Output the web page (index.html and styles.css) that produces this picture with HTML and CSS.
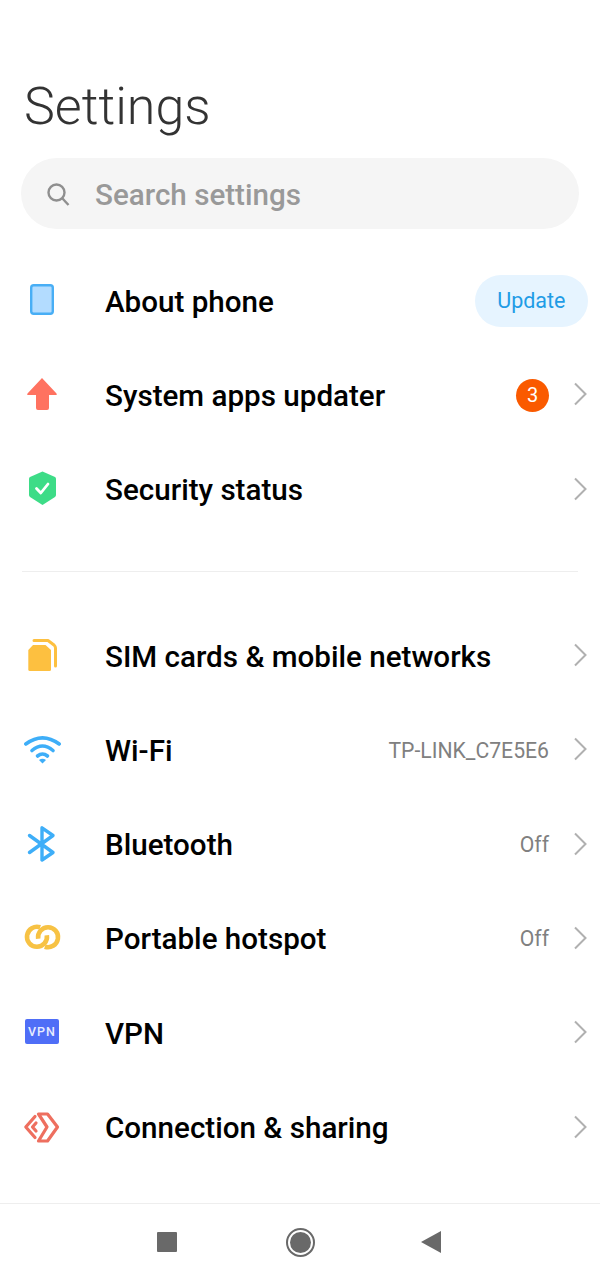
FILE: index.html
```html
<!DOCTYPE html>
<html lang="en">

<head>
  <meta charset="UTF-8">
  <meta name="viewport" content="width=device-width, initial-scale=1.0">
  <title>Settings</title>

  <link rel="stylesheet" href="styles.css">
</head>

<body>
  <main id="screen">
    <h1 class="title">Settings</h1>

    <div class="search">
      <svg class="search-icon" width="26" height="26" viewBox="0 0 26 26">
        <circle cx="11.5" cy="11.5" r="8" fill="none" stroke="#8f8f8f" stroke-width="2.4" />
        <path d="M17.5 17.5 L23.5 24" fill="none" stroke="#8f8f8f" stroke-width="2.4" />
      </svg>
      <span class="search-text">Search settings</span>
    </div>

    <div class="group group-top">
      <div class="row">
        <div class="row-icon">
          <svg width="40" height="40" viewBox="0 0 40 40">
            <rect x="9.200" y="4.200" width="21.600" height="28.600" rx="2.500" fill="#b3dcff" stroke="#48aef5" stroke-width="2.400" />
          </svg>
        </div>
        <span class="label">About phone</span>
        <span class="update">Update</span>
      </div>

      <div class="row">
        <div class="row-icon">
          <svg width="40" height="40" viewBox="0 0 40 40">
            <path d="M20 3 L34.500 18.500 Q35.500 20 34 20 L27 20 L27 33 Q27 35 25 35 L16 35 Q14 35 14 33 L14 20 L6.500 20 Q4.500 20 5.500 18.500 Z" fill="#ff7260" />
          </svg>
        </div>
        <span class="label">System apps updater</span>
        <span class="badge">3</span>
        <svg class="chevron" width="14" height="24" viewBox="0 0 14 24"><path d="M2 1.500 L12.500 12 L2 22.500" /></svg>
      </div>

      <div class="row">
        <div class="row-icon">
          <svg width="40" height="40" viewBox="0 0 40 40">
            <path d="M20.500 1.500 L33 7 Q34 7.500 34 9 L34 25 Q34 26 33 27 L20.500 35 L8 27 Q7 26 7 25 L7 9 Q7 7.500 8 7 Z" fill="#3ddc87" />
            <path d="M14.500 18.500 L18.800 23 L26 14" fill="none" stroke="#fff" stroke-width="2.800" stroke-linecap="round" stroke-linejoin="round" />
          </svg>
        </div>
        <span class="label">Security status</span>
        <svg class="chevron" width="14" height="24" viewBox="0 0 14 24"><path d="M2 1.500 L12.500 12 L2 22.500" /></svg>
      </div>
    </div>

    <div class="divider"></div>

    <div class="group">
      <div class="row">
        <div class="row-icon">
          <svg width="40" height="40" viewBox="0 0 40 40">
            <path d="M12 4.500 L26 4.500 L32 9 Q33.500 10.500 33.500 12 L33.500 30" fill="none" stroke="#fdc040" stroke-width="3" stroke-linecap="round" stroke-linejoin="round" />
            <path d="M11 9 L23.500 9 L29 14 L29 33.500 Q29 35 27.500 35 L7.800 35 Q6.300 35 6.300 33.500 L6.300 14 Z" fill="#fdc040" />
          </svg>
        </div>
        <span class="label">SIM cards &amp; mobile networks</span>
        <svg class="chevron" width="14" height="24" viewBox="0 0 14 24"><path d="M2 1.500 L12.500 12 L2 22.500" /></svg>
      </div>

      <div class="row">
        <div class="row-icon">
          <svg width="40" height="40" viewBox="0 0 40 40">
            <g fill="none" stroke="#3eaef8" stroke-width="3.600" stroke-linecap="round">
              <path d="M3.800 14 Q20.500 1.600 37.200 14" />
              <path d="M10 20.500 Q20.500 11.500 31 20.500" />
              <path d="M15.500 26 Q20.500 22 25.500 26" />
            </g>
            <path d="M20.500 33.500 L17 30 Q20.500 27.500 24 30 Z" fill="#3eaef8" />
          </svg>
        </div>
        <span class="label">Wi-Fi</span>
        <span class="value">TP-LINK_C7E5E6</span>
        <svg class="chevron" width="14" height="24" viewBox="0 0 14 24"><path d="M2 1.500 L12.500 12 L2 22.500" /></svg>
      </div>

      <div class="row">
        <div class="row-icon">
          <svg width="40" height="40" viewBox="0 0 40 40">
            <path d="M7.500 10.500 L31 27.500 L20 35 L20 2.800 L31 10.500 L7.500 27.500" fill="none" stroke="#3eaef8" stroke-width="3.400" stroke-linecap="round" stroke-linejoin="round" />
          </svg>
        </div>
        <span class="label">Bluetooth</span>
        <span class="value">Off</span>
        <svg class="chevron" width="14" height="24" viewBox="0 0 14 24"><path d="M2 1.500 L12.500 12 L2 22.500" /></svg>
      </div>

      <div class="row">
        <div class="row-icon">
          <svg width="40" height="40" viewBox="0 0 40 40">
            <g fill="none" stroke="#f7c244" stroke-width="4.600">
              <path d="M18.200 8.300 A 10 10 0 1 0 24.850 16.260" />
              <path d="M22.800 27.700 A 10 10 0 1 0 16.150 19.740" />
            </g>
          </svg>
        </div>
        <span class="label">Portable hotspot</span>
        <span class="value">Off</span>
        <svg class="chevron" width="14" height="24" viewBox="0 0 14 24"><path d="M2 1.500 L12.500 12 L2 22.500" /></svg>
      </div>

      <div class="row">
        <div class="row-icon">
          <span class="vpn">VPN</span>
        </div>
        <span class="label">VPN</span>
        <svg class="chevron" width="14" height="24" viewBox="0 0 14 24"><path d="M2 1.500 L12.500 12 L2 22.500" /></svg>
      </div>

      <div class="row">
        <div class="row-icon">
          <svg width="40" height="40" viewBox="0 0 40 40">
            <g fill="none" stroke="#ee6f5f" stroke-width="3.200" stroke-linejoin="round" stroke-linecap="round">
              <path d="M13 8.500 L3.800 19 L13 29.500" />
              <path d="M16.500 6 L25.500 6 L35.500 19 L25.500 33 L16.500 33 L25 19 Z" />
              <path d="M14 15 L10.500 19 L14 23" />
            </g>
          </svg>
        </div>
        <span class="label">Connection &amp; sharing</span>
        <svg class="chevron" width="14" height="24" viewBox="0 0 14 24"><path d="M2 1.500 L12.500 12 L2 22.500" /></svg>
      </div>
    </div>

    <div class="navbar">
      <div class="nav-square"></div>
      <div class="nav-home"><div class="nav-home-dot"></div></div>
      <svg width="20" height="22" viewBox="0 0 20 22"><path d="M0 11 L20 0 L20 22 Z" fill="#696969" /></svg>
    </div>
  </main>
</body>

</html>
```

FILE: styles.css
```css
html,
body {
  padding: 0;
  margin: 0;
  overflow: hidden;
  background-color: #fff;
}

#screen {
  display: flex;
  flex-direction: column;
  width: 600px;
  height: 1280px;
  font-family: Roboto, "Liberation Sans", sans-serif;
}

.title {
  margin: 77px 0 0 24px;
  font-size: 52px;
  line-height: 60px;
  font-weight: 300;
  color: #333;
}

.search {
  display: flex;
  align-items: center;
  height: 71px;
  margin: 21px 21px 0;
  padding-left: 24px;
  border-radius: 36px;
  background-color: #f5f5f5;
}

.search-icon {
  margin-right: 24px;
}

.search-text {
  margin-top: 2px;
  font-size: 29.6px;
  font-weight: 500;
  color: #999;
}

.group {
  display: flex;
  flex-direction: column;
}

.group-top {
  margin-top: 25px;
}

.row {
  display: flex;
  align-items: center;
  height: 94.3px;
  padding: 0 13px 0 22px;
  box-sizing: border-box;
}

.row-icon {
  display: flex;
  align-items: center;
  justify-content: center;
  width: 40px;
  height: 40px;
  margin-right: 43px;
}

.label {
  flex: 1;
  padding-top: 1px;
  font-size: 29.6px;
  font-weight: 500;
  color: #000;
}

.value {
  margin-right: 24px;
  font-size: 21.2px;
  color: #808080;
}

.update {
  margin-top: -1px;
  margin-right: -1px;
  padding: 0 22.5px;
  height: 52px;
  line-height: 52px;
  border-radius: 26px;
  background-color: #e6f4ff;
  color: #1f9ce6;
  font-size: 21.5px;
}

.badge {
  width: 33px;
  height: 33px;
  margin-right: 24px;
  border-radius: 50%;
  background-color: #fa5a00;
  color: #fff;
  font-size: 20px;
  line-height: 33px;
  text-align: center;
}

.chevron {
  margin-bottom: 2px;
  fill: none;
  stroke: #b0b0b0;
  stroke-width: 2;
}

.vpn {
  width: 34px;
  height: 25px;
  margin-bottom: 3px;
  border-radius: 2px;
  background-color: #4f6ef7;
  color: #e8ecff;
  font-size: 12.5px;
  font-weight: 500;
  line-height: 25px;
  letter-spacing: 1px;
  text-align: center;
}

.divider {
  height: 1px;
  margin: 34px 22px 37px;
  background-color: #eee;
}

.navbar {
  display: flex;
  align-items: center;
  justify-content: center;
  height: 76px;
  padding-right: 2px;
  margin-top: auto;
  border-top: 1px solid #eee;
}

.nav-square {
  width: 20px;
  height: 20px;
  border-radius: 1px;
  background-color: #696969;
}

.nav-home {
  display: flex;
  align-items: center;
  justify-content: center;
  width: 29px;
  height: 29px;
  margin: 0 106px 0 109px;
  box-sizing: border-box;
  border: 2px solid #696969;
  border-radius: 50%;
}

.nav-home-dot {
  width: 21px;
  height: 21px;
  border-radius: 50%;
  background-color: #696969;
}
```
